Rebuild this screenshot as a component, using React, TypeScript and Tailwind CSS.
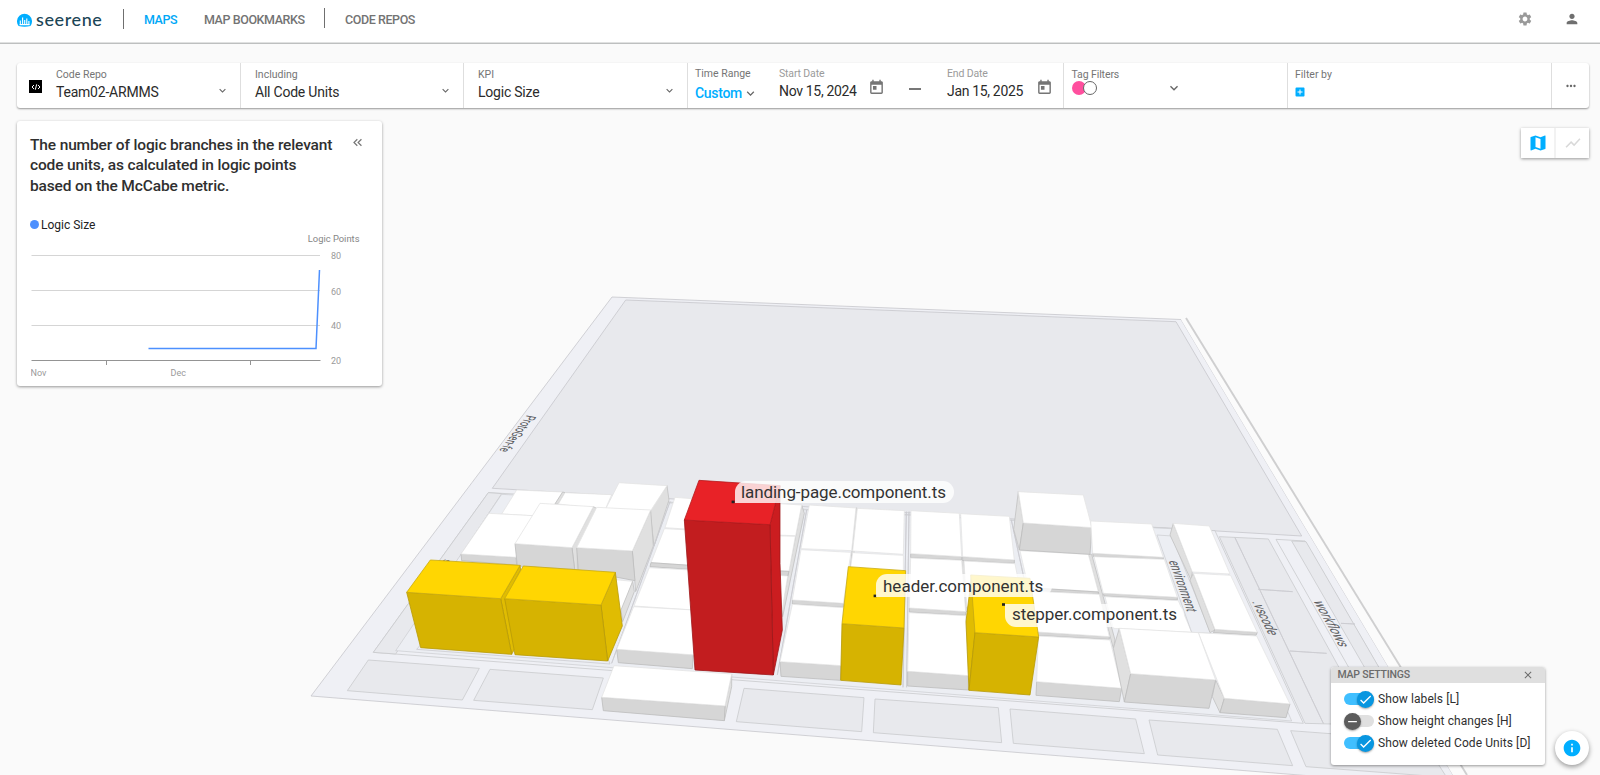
import React from "react";
import {
  MdSettings,
  MdPerson,
  MdMap,
  MdShowChart,
  MdToday,
  MdMoreHoriz,
  MdAddBox,
  MdKeyboardDoubleArrowLeft,
  MdClose,
  MdInfo,
  MdCheck,
  MdRemove,
  MdExpandMore,
} from "react-icons/md";

type Face = [kind: string, points: string];

const fills: Record<string, [string, string]> = {
  top: ["#ffffff", "#e4e4e4"],
  front: ["#d6d6d6", "#bdbdbd"],
  side: ["#e0e0e0", "#c2c2c2"],
  yTop: ["#ffd602", "#c9ab10"],
  yFront: ["#d6b301", "#b89b08"],
  ySide: ["#e0bc02", "#b89b08"],
  rTop: ["#e82227", "#b51a1d"],
  rFront: ["#c21d1f", "#9d1719"],
  rSide: ["#cb1d20", "#9d1719"],
  leaf: ["#e8e9ed", "#c9cacd"],
  folder: ["#eff0f5", "#c9cacd"],
  inner: ["#eceef3", "#cfd0d4"],
  line: ["none", "#cbccd0"],
};

function Faces({ x, y, items }: { x: number; y: number; items: Face[] }) {
  return (
    <g transform={`translate(${x} ${y}) scale(0.33333)`}>
      {items.map(([kind, points], i) => (
        <polygon
          key={i}
          points={points}
          fill={fills[kind][0]}
          stroke={fills[kind][1]}
          strokeWidth={2.4}
          strokeLinejoin="round"
        />
      ))}
    </g>
  );
}

const ground: Face[] = [
  ["folder", "-1475,158 705,272 970,850 -1820,637"],
  ["leaf", "-1475,158 -1435,161 -1753,642 -1820,637"],
  ["inner", "-1435,163 690,272 935,843 -1753,632"],
  ["line", "-1320,190 -1300,190 -1110,672 -1690,628"],
  ["leaf", "718,290 865,297 1172,855 975,850"],
  ["line", "765,293 1030,850"],
  ["line", "835,448 938,455"],
  ["line", "930,633 1040,640"],
  ["folder", "888,298 975,303 1300,860 1206,858"],
  ["leaf", "935,303 978,305 1300,860 1255,858"],
  ["line", "1083,550 1125,552"],
  ["leaf", "-1835,660 -1502,685 -1553,780 -1898,752"],
  ["leaf", "-1470,688 -1130,714 -1163,809 -1519,781"],
  ["leaf", "-708,745 -348,773 -355,875 -731,845"],
  ["leaf", "-315,777 55,803 65,908 -320,878"],
  ["leaf", "90,807 467,837 493,941 100,910"],
  ["leaf", "507,840 892,868 938,977 533,945"],
  ["leaf", "932,872 1330,902 1400,1012 978,980"],
];

const leftBlocks: Face[] = [
  ["top", "650,150 788,156 740,230 605,222"],
  ["side", "788,156 795,158 775,192 765,192"],
  ["top", "795,158 935,164 915,210 775,192"],
  ["front", "483,342 648,352 650,375 485,362"],
  ["top", "567,220 700,227 648,352 483,342"],
  ["side", "1101,137 1107,180 1062,318 1050,210"],
  ["top", "957,128 1101,137 1050,215 918,205"],
  ["side", "880,200 890,205 832,325 832,390 824,388 816,323"],
  ["front", "645,311 816,323 824,388 652,378"],
  ["top", "720,190 880,200 816,323 645,311"],
  ["top", "935,418 998,424 963,520 940,520"],
  ["side", "998,424 1003,455 968,545 963,510"],
  ["side", "1052,210 1060,318 1007,455 997,333"],
  ["front", "830,323 997,333 1005,422 835,390"],
  ["top", "890,202 1052,210 997,333 830,323"],
  ["ySide", "660,376 662,390 616,478 645,625 635,643 602,476"],
  ["yFront", "320,457 602,476 635,643 362,623"],
  ["yTop", "391,360 660,376 602,476 320,457"],
  ["ySide", "946,397 967,558 923,663 903,495"],
  ["yFront", "614,476 903,495 923,663 645,644"],
  ["yTop", "670,378 946,397 903,495 614,476"],
];

const midBlocks: Face[] = [
  ["line", "90,185 -85,670"],
  ["top", "105,172 180,178 150,268 75,263"],
  ["top", "73,266 150,270 150,376 33,368"],
  ["front", "33,368 150,376 150,388 30,380"],
  ["top", "28,383 150,390 160,510 -18,498"],
  ["front", "-70,628 160,644 157,686 -65,668"],
  ["top", "-19,500 160,510 163,645 -70,628"],
  ["side", "485,195 493,220 428,530 425,505"],
  ["top", "400,190 485,195 467,287 400,285"],
  ["top", "400,287 466,289 447,394 400,392"],
  ["front", "400,392 447,394 443,408 400,405"],
  ["top", "400,405 443,408 425,520 400,520"],
  ["line", "500,210 412,705"],
  ["rSide", "420,137 420,370 427,570 400,705 390,254"],
  ["rFront", "133,240 390,254 400,705 165,690"],
  ["rTop", "177,121 420,137 390,254 133,240"],
  ["side", "275,702 275,740 253,842 255,798"],
  ["front", "-115,772 255,798 253,842 -110,812"],
  ["top", "-78,677 275,702 255,798 -115,772"],
  ["line", "799,215 789,742"],
  ["line", "807,215 800,742"],
  ["side", "648,204 652,205 638,395 630,395"],
  ["top", "508,195 648,204 635,332 483,326"],
  ["top", "652,205 793,212 790,343 638,333"],
  ["front", "457,480 610,490 610,502 457,492"],
  ["top", "483,329 633,337 610,490 457,480"],
  ["top", "638,338 790,346 790,400 630,395"],
  ["front", "420,665 603,677 601,721 423,709"],
  ["top", "457,493 610,503 603,677 420,665"],
  ["yFront", "606,551 792,564 783,735 602,721"],
  ["yTop", "625,380 797,392 792,564 606,551"],
  ["front", "812,341 965,350 965,360 812,353"],
  ["top", "813,212 958,220 965,350 812,341"],
  ["front", "968,350 1123,360 1123,370 968,362"],
  ["top", "962,221 1108,229 1123,360 968,350"],
  ["side", "965,361 972,363 982,515 977,515"],
  ["front", "808,504 977,515 977,526 808,516"],
  ["top", "812,354 965,361 977,515 808,504"],
  ["top", "972,363 1125,371 1150,500 980,500"],
  ["front", "803,694 985,707 985,750 803,738"],
  ["top", "807,518 977,527 985,707 803,694"],
];

const rightBlocks: Face[] = [
  ["line", "94,240 170,590"],
  ["side", "325,343 335,343 405,600 400,625"],
  ["top", "120,332 325,343 355,455 145,443"],
  ["front", "145,443 355,456 355,463 145,451"],
  ["side", "115,155 101,268 118,330 130,249"],
  ["front", "130,249 336,263 330,343 118,330"],
  ["top", "115,155 310,165 336,263 130,249"],
  ["front", "338,340 550,352 550,357 340,350"],
  ["top", "332,243 515,252 550,352 338,340"],
  ["front", "370,460 592,472 592,480 372,468"],
  ["top", "342,350 553,358 592,472 370,460"],
  ["front", "170,576 388,590 388,598 170,586"],
  ["top", "146,453 358,463 388,590 170,576"],
  ["top", "375,470 595,482 635,577 400,565"],
  ["inner", "531,285 575,288 692,580 635,577"],
  ["front", "170,725 425,745 418,785 168,766"],
  ["top", "175,588 390,600 425,745 170,725"],
  ["side", "580,250 570,285 633,420 637,396"],
  ["top", "580,250 688,258 750,402 637,396"],
  ["side", "640,400 630,420 690,578 705,570"],
  ["front", "705,568 832,577 828,586 700,578"],
  ["top", "640,400 752,406 832,577 705,568"],
  ["side", "707,720 733,775 720,818 697,770"],
  ["front", "733,775 930,792 918,833 720,818"],
  ["top", "655,578 830,588 930,792 733,775"],
  ["side", "418,565 400,625 433,786 452,701"],
  ["front", "452,701 707,720 687,805 433,786"],
  ["top", "418,565 655,578 707,720 452,701"],
];

const stepper: Face[] = [
  ["ySide", "995,405 978,545 987,751 1005,578"],
  ["yFront", "1005,578 1196,591 1170,765 987,751"],
  ["yTop", "992,405 1170,415 1196,591 1005,578"],
];

function CityMap() {
  return (
    <svg className="absolute inset-0" width="1600" height="775" viewBox="0 0 1600 775">
      <polygon points="612,297 1181,319.5 1453,775 1462,788 311,696" fill="#eff0f5" stroke="#c6c7cb" strokeWidth="0.8" />
      <polygon points="1181,319.5 1185.7,317.7 1467,775 1453,775" fill="#fbfbfb" />
      <path d="M1186 318 L1467 775" stroke="#cfcfd0" strokeWidth="1.9" fill="none" />
      <polygon points="625.7,300 1176,321.7 1301.7,536 492.3,488.3" fill="#e8e9ed" stroke="#c6c7cb" strokeWidth="0.8" />
      <Faces x={980} y={440} items={ground} />
      <g fontFamily="Roboto, sans-serif" fontSize="16" fill="#55565a">
        <text transform="matrix(-.33 .42 -.85 -.16 527 415)">ProtoGen-fe</text>
        <text transform="matrix(-.29 .5 -.75 -.1 444 559)">src</text>
      </g>
      <Faces x={300} y={440} items={leftBlocks} />
      <Faces x={640} y={440} items={midBlocks} />
      <Faces x={980} y={440} items={rightBlocks} />
      <Faces x={640} y={440} items={stepper} />
      <g fontFamily="Roboto, sans-serif" fontSize="16" fill="#5c5d61">
        <text transform="matrix(.21 .575 -.95 -.05 1168.5 560.5)">environment</text>
        <text transform="matrix(.3 .6 -.98 -.1 1252 601.5)">.vscode</text>
        <text transform="matrix(.36 .63 -1 -.1 1313 600.5)">workflows</text>
      </g>
      <g fill="#222">
        <rect x="731.6" y="500.6" width="3" height="2.6" />
        <rect x="873.6" y="594.6" width="3" height="2.6" />
        <rect x="1002" y="603.2" width="3" height="2.6" />
      </g>
    </svg>
  );
}

function Logo() {
  return (
    <div className="flex items-center">
      <svg width="15" height="14" viewBox="0 0 15 14">
        <path d="M1.6 13 A7.5 7.5 0 1 1 13.4 13 Q7.5 14.4 1.6 13Z" fill="#00aeff" />
        <path d="M3.3 7.5V11.5M5.6 4.5V11.5M7.7 7V11.5M9.8 5.5V11.5M11.9 8V11.5M2.5 11.6H12.7" stroke="#fff" strokeWidth="1.1" fill="none" />
      </svg>
      <span className="mb-[2px] ml-[4px] font-[Lato,sans-serif] text-[18px] leading-5 tracking-[0.6px] text-[#1b4556]">seerene</span>
    </div>
  );
}

function Select({ label, value }: { label: string; value: string }) {
  return (
    <div className="flex flex-1 items-end justify-between">
      <div>
        <div className="text-[10.5px] leading-[14px] text-[#757575]">{label}</div>
        <div className="text-[14px] leading-5 tracking-[-0.22px] text-[#2b2b2b]">{value}</div>
      </div>
      <MdExpandMore className="mr-[11px] mb-[5px] size-[13px] text-[#666]" />
    </div>
  );
}

function DateField({ label, value }: { label: string; value: string }) {
  return (
    <div className="flex">
      <div className="w-[89px]">
        <div className="text-[10.5px] leading-[14px] tracking-[-0.15px] text-[#9b9b9b]">{label}</div>
        <div className="text-[14px] leading-5 tracking-[-0.33px] whitespace-nowrap text-[#2b2b2b]">{value}</div>
      </div>
      <MdToday className="mt-[12px] size-[17px] text-[#757575]" />
    </div>
  );
}

function Toggle({ on, label }: { on: boolean; label: string }) {
  return (
    <div className="flex h-[22px] items-center gap-1">
      <div className={on ? "flex h-3 w-[30px] items-center justify-end rounded-full bg-[#40bfff]" : "flex h-3 w-[30px] items-center rounded-full bg-[#e0e0e0]"}>
        <div
          className={
            on
              ? "flex size-[17px] shrink-0 items-center justify-center rounded-full bg-[#0896e0] text-white shadow-[0_1px_2px_rgba(0,0,0,0.35)]"
              : "flex size-[17px] shrink-0 items-center justify-center rounded-full bg-[#5c5c5c] text-white shadow-[0_1px_2px_rgba(0,0,0,0.35)]"
          }
        >
          {on ? <MdCheck className="size-[15px]" /> : <MdRemove className="size-[15px]" />}
        </div>
      </div>
      <span className="text-[12px] tracking-[0.08px] whitespace-nowrap text-[#2f2f2f]">{label}</span>
    </div>
  );
}

function TrendChart() {
  return (
    <svg className="block" width="346" height="148" viewBox="0 0 346 148" fontFamily="Roboto, sans-serif" fontSize="9" fill="#9a9a9a">
      <text x="328.5" y="8.5" textAnchor="end" fill="#858585" fontSize="9.4">Logic Points</text>
      <path d="M.5 22.5H289M.5 57.5H289M.5 92.5H289" stroke="#d5d5d5" />
      <path d="M.5 127.5H289.5M75.5 128V132M219.5 128V132" stroke="#949494" fill="none" />
      <path d="M117.5 115.5H285L288.5 37" stroke="#4d90fe" strokeWidth="1.5" fill="none" />
      <text x="300" y="26">80</text>
      <text x="300" y="61.5">60</text>
      <text x="300" y="96">40</text>
      <text x="300" y="131">20</text>
      <text x="-.5" y="143">Nov</text>
      <text x="139.5" y="143">Dec</text>
    </svg>
  );
}

export default function App() {
  return (
    <div className="relative flex h-[775px] w-[1600px] flex-col overflow-hidden bg-[#fafafa] font-[Roboto,sans-serif]">
      <CityMap />

      <header className="relative flex h-11 shrink-0 items-start border-b border-[#bdbfbf] bg-white text-[12.5px] leading-5 font-medium tracking-[-0.42px] text-[#737373] shadow-[inset_0_-1px_0_#e0e1e1]">
        <div className="ml-[17px] flex h-10 w-[106px] items-center">
          <Logo />
        </div>
        <div className="mt-[9px] h-5 w-px bg-[#6f6f6f]" />
        <div className="mt-[9.5px] ml-[20px] w-[60px] text-[#00a8f7]">MAPS</div>
        <div className="mt-[9.5px] w-[120px] whitespace-nowrap">MAP BOOKMARKS</div>
        <div className="mt-[8px] h-5 w-px bg-[#6f6f6f]" />
        <div className="mt-[9.5px] ml-[20px]">CODE REPOS</div>
        <div className="mt-[11px] mr-[20px] ml-auto flex gap-[31px]">
          <MdSettings className="size-4 text-[#999]" />
          <MdPerson className="size-4 text-[#6f6f6f]" />
        </div>
      </header>

      <section className="relative mt-[19px] ml-[17px] flex h-[45px] w-[1572px] shrink-0 divide-x divide-[#dedede] rounded-[3px] bg-white shadow-[0_1px_2px_rgba(0,0,0,0.4)]">
        <div className="flex w-[224px] pt-[5px]">
          <div className="mt-[12px] ml-[12px] flex size-[13px] items-center justify-center bg-black">
            <svg width="10" height="8" viewBox="0 0 10 8" stroke="#fff" fill="none">
              <path d="M3 2L1 4L3 6M7 2L9 4L7 6M5.7 1.3L4.3 6.7" />
            </svg>
          </div>
          <div className="ml-[14px] flex h-[34px] flex-1"><Select label="Code Repo" value="Team02-ARMMS" /></div>
        </div>
        <div className="flex h-full w-[223px] pt-[5px] pb-[6px] pl-[14px]"><Select label="Including" value="All Code Units" /></div>
        <div className="flex h-full w-[224px] pt-[5px] pb-[6px] pl-[14px]"><Select label="KPI" value="Logic Size" /></div>
        <div className="flex w-[376px] pt-[4px] pl-[7px]">
          <div className="w-[84px]">
            <div className="text-[10.5px] leading-[14px] text-[#757575]">Time Range</div>
            <div className="mt-px flex items-center text-[14px] leading-[22px] font-medium tracking-[-0.3px] text-[#00aeff]">
              Custom
              <MdExpandMore className="ml-px size-[15px] text-[#666]" />
            </div>
          </div>
          <DateField label="Start Date" value="Nov 15, 2024" />
          <div className="mt-[21px] mr-[26px] ml-[24px] h-[1.5px] w-[12px] bg-[#777]" />
          <DateField label="End Date" value="Jan 15, 2025" />
        </div>
        <div className="flex w-[224px] pt-[5px] pl-[7.5px]">
          <div className="w-[94px]">
            <div className="text-[10.5px] leading-[14px] tracking-[-0.1px] text-[#757575]">Tag Filters</div>
            <div className="-mt-px flex">
              <div className="size-[14px] rounded-full bg-[#ff4f9e]" />
              <div className="-ml-[3px] size-[14px] rounded-full border border-[#666] bg-white" />
            </div>
          </div>
          <MdExpandMore className="mt-[12px] size-4 text-[#666]" />
        </div>
        <div className="w-[264px] pt-[5px] pl-[7px]">
          <div className="text-[10.5px] leading-[14px] text-[#757575]">Filter by</div>
          <MdAddBox className="mt-[4px] -ml-px size-3 text-[#00aeff]" />
        </div>
        <div className="flex flex-1 items-center justify-center">
          <MdMoreHoriz className="size-3.5 text-[#666]" />
        </div>
      </section>

      <div className="relative mt-[13px] flex items-start justify-between pr-[11px] pl-[17px]">
        <section className="h-[265px] w-[365px] rounded-[3px] bg-white pt-[14px] pl-[13px] shadow-[0_1px_3px_rgba(0,0,0,0.4)]">
          <div className="flex">
            <h2 className="w-[320px] text-[15.5px] leading-[20.3px] font-medium tracking-[-0.14px] whitespace-nowrap text-[#2f2f2f]">
              The number of logic branches in the relevant<br />code units, as calculated in logic points<br />based on the McCabe metric.
            </h2>
            <MdKeyboardDoubleArrowLeft className="size-[15px] text-[#777]" />
          </div>
          <div className="mt-[19px] flex h-5 items-center text-[12px] leading-5 text-[#222]">
            <span className="mr-[2px] size-[9px] rounded-full bg-[#4d90fe]" />
            Logic Size
          </div>
          <div className="mt-[-2px] ml-[1px]"><TrendChart /></div>
        </section>
        <div className="mt-[7px] flex h-[30px] w-[68px] divide-x-2 divide-[#f2f2f2] bg-white shadow-[0_1px_3px_rgba(0,0,0,0.4)]">
          <div className="flex w-[35px] items-center justify-center"><MdMap className="size-5 text-[#00aeff]" /></div>
          <div className="flex w-[33px] items-center justify-center"><MdShowChart className="size-[18px] text-[#d9d9d9]" /></div>
        </div>
      </div>

      <div className="absolute top-[481px] left-[735px] flex h-[22px] w-[219px] items-center rounded-[11px] rounded-bl-none bg-white/80 pt-px pl-[6px] text-[17px] tracking-[-0.08px] whitespace-nowrap text-[#333]">landing-page.component.ts</div>
      <div className="absolute top-[574px] left-[876px] flex h-[23px] w-[176px] items-center rounded-[11px] rounded-bl-none bg-white/80 pt-[2px] pl-[7px] text-[17px] whitespace-nowrap text-[#333]">header.component.ts</div>
      <div className="absolute top-[604px] left-[1005px] flex h-[23px] w-[179px] items-center rounded-[11px] rounded-tl-none bg-white/80 pb-[2px] pl-[7px] text-[17px] tracking-[-0.03px] whitespace-nowrap text-[#333]">stepper.component.ts</div>

      <aside className="absolute top-[667px] left-[1331px] h-[98px] w-[214px] overflow-hidden rounded-[3px] bg-white shadow-[0_1px_3px_rgba(0,0,0,0.4)]">
        <div className="flex h-4 items-center justify-between bg-[#dfdfdf] pr-[11px] pl-[6.5px] text-[10.5px] font-medium tracking-[-0.2px] text-[#6b6b6b]">
          MAP SETTINGS
          <MdClose className="mb-px size-3" />
        </div>
        <div className="pt-[5px] pl-[13px]">
          <Toggle on label="Show labels [L]" />
          <Toggle on={false} label="Show height changes [H]" />
          <Toggle on label="Show deleted Code Units [D]" />
        </div>
      </aside>
      <div className="absolute top-[731px] left-[1555px] flex size-[34px] items-center justify-center rounded-full bg-white shadow-[0_2px_5px_rgba(0,0,0,0.4)]">
        <MdInfo className="size-5 text-[#00aeff]" />
      </div>
    </div>
  );
}
